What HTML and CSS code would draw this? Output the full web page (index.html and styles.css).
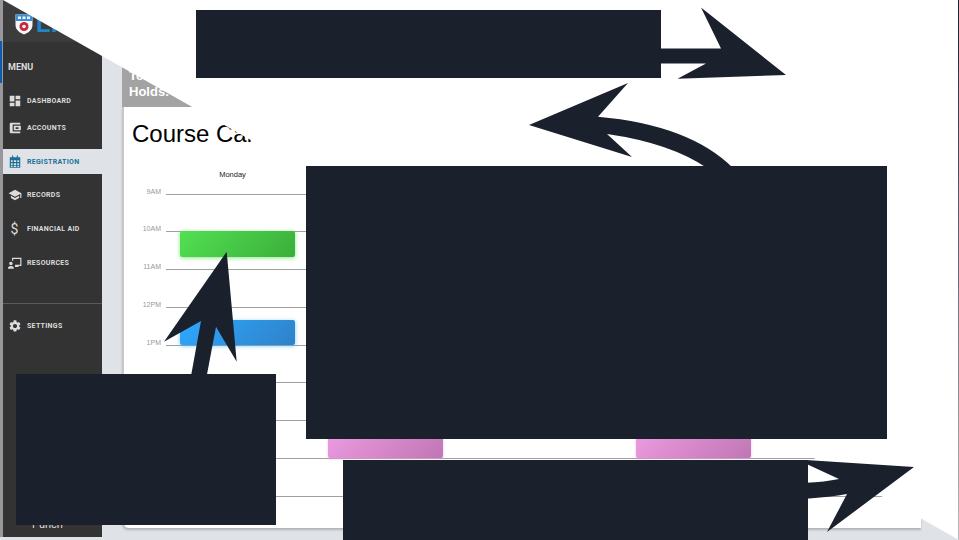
FILE: index.html
```html
<!DOCTYPE html>
<html lang="en">
<head>
<meta charset="utf-8">
<title>Course Calendar</title>
<link rel="stylesheet" href="styles.css">
</head>
<body>
<div class="app">
  <aside class="sidebar">
    <div class="brand">
      <svg class="shield" viewBox="0 0 18 21"><path d="M0.5 0.5H17.5V11C17.5 16 13 19 9 20.5C5 19 0.5 16 0.5 11Z" fill="#f4f6f8"/><path d="M0.5 0.5H17.5V7H0.5Z" fill="#3f8fd0"/><rect x="3" y="2.5" width="3" height="2.5" fill="#eaf2fa"/><rect x="7.5" y="2.5" width="3" height="2.5" fill="#eaf2fa"/><rect x="12" y="2.5" width="3" height="2.5" fill="#eaf2fa"/><circle cx="9" cy="12.5" r="4.5" fill="#c8283c"/><circle cx="9" cy="12.5" r="1.8" fill="#f4f6f8"/></svg>
      <span class="brand-name">LIU</span>
    </div>
    <div class="menu-title">MENU</div>
    <nav class="nav-top">
      <a class="nav-item"><svg class="icon" viewBox="0 0 24 24"><path d="M3 13h8V3H3v10zm0 8h8v-6H3v6zm10 0h8V11h-8v10zm0-18v6h8V3h-8z"/></svg>DASHBOARD</a>
      <a class="nav-item"><svg class="icon" viewBox="0 0 24 24"><path fill-rule="evenodd" d="M5 3h16v3H8v12h13v3H5a2 2 0 0 1-2-2V5a2 2 0 0 1 2-2zM10 8h12v8H10zm3 2.500v3h5v-3z"/></svg>ACCOUNTS</a>
    </nav>
    <nav class="nav-main">
      <a class="nav-item active"><svg class="icon" viewBox="0 0 24 24"><path fill-rule="evenodd" d="M7 1h2v3h6V1h2v3h4v18H3V4h4zM5 9v3h3V9zm5 0v3h4V9zm6 0v3h3V9zM5 14v3h3v-3zm5 0v3h4v-3zm6 0v3h3v-3zM5 18.500v2h3v-2zm5 0v2h4v-2zm6 0v2h3v-2z"/></svg>REGISTRATION</a>
      <a class="nav-item"><svg class="icon" viewBox="0 0 24 24"><path d="M5 13.180v4L12 21l7-3.820v-4L12 17l-7-3.820zM12 3L1 9l11 6 9-4.910V17h2V9L12 3z"/></svg>RECORDS</a>
      <a class="nav-item"><span class="icon dollar">$</span>FINANCIAL AID</a>
      <a class="nav-item"><svg class="icon" viewBox="0 0 24 24"><path fill-rule="evenodd" d="M7 3h16v14H12v-2h9V5H9v3H7zM5 10a3 3 0 1 1 0 6 3 3 0 0 1 0-6zM0 21c0-2.500 2-4 5-4s5 1.500 5 4v1H0zM12 17h6v2h-6z"/></svg>RESOURCES</a>
    </nav>
    <nav class="nav-settings">
      <a class="nav-item"><svg class="icon" viewBox="0 0 24 24"><path d="M19.140 12.940c.04-.3.06-.61.06-.94 0-.32-.02-.64-.07-.94l2.030-1.580a.49.49 0 0 0 .12-.61l-1.920-3.320a.488.488 0 0 0-.59-.29l-2.390.96c-.5-.38-1.030-.7-1.620-.94l-.36-2.540a.484.484 0 0 0-.48-.41h-3.840c-.24 0-.43.17-.47.41l-.36 2.540c-.59.24-1.130.57-1.620.94l-2.390-.96c-.22-.08-.47 0-.59.29L2.740 8.870c-.12.21-.08.47.12.61l2.030 1.580c-.05.3-.09.63-.09.94s.02.64.07.94l-2.030 1.580a.49.49 0 0 0-.12.61l1.920 3.320c.12.22.37.29.59.22l2.390-.96c.5.38 1.030.7 1.620.94l.36 2.540c.05.24.24.41.48.41h3.840c.24 0 .44-.17.47-.41l.36-2.540c.59-.24 1.130-.56 1.620-.94l2.390.96c.22.08.47 0 .59-.22l1.920-3.320c.12-.22.07-.47-.12-.61l-2.010-1.580zM12 15.600c-1.980 0-3.600-1.620-3.600-3.600s1.620-3.600 3.600-3.600 3.600 1.620 3.600 3.600-1.620 3.600-3.600 3.600z"/></svg>SETTINGS</a>
    </nav>
    <div class="sidebar-foot">Punch</div>
  </aside>
  <main class="main">
    <div class="banner">
      <p>Total</p>
      <p>Holds:</p>
    </div>
    <section class="card">
      <h1 class="title">Course Calendar</h1>
      <div class="calendar">
        <div class="days">
          <div>Monday</div><div>Tuesday</div><div>Wednesday</div><div>Thursday</div><div>Friday</div>
        </div>
        <div class="hour first"><span>9AM</span></div>
        <div class="hour"><span>10AM</span></div>
        <div class="hour"><span>11AM</span></div>
        <div class="hour"><span>12PM</span></div>
        <div class="hour"><span>1PM</span></div>
        <div class="hour"><span>2PM</span></div>
        <div class="hour"><span>3PM</span></div>
        <div class="hour"><span>4PM</span></div>
        <div class="hour"><span>5PM</span></div>
        <div class="event green" style="left:58px;top:61px;height:26px"></div>
        <div class="event blue" style="left:58px;top:150px;height:25px"></div>
        <div class="event pink" style="left:206px;top:250px;height:38px"></div>
        <div class="event pink" style="left:514px;top:250px;height:38px"></div>
      </div>
    </section>
  </main>
</div>
<div class="sheet"></div>
<svg class="arrows" viewBox="0 0 959 540">
  <path d="M701,7.500L721,48.500H650V63.500H706L677.500,78.700L786,75Z"/>
  <path d="M529,125L628,83L598,116.700Q690,125 733,168L707,168Q670,143 607,134L632,157Z"/>
  <path d="M226.700,251.700L164,341.700L201,321L191,376H206.700L216,326.700L236.700,361.700Z"/>
  <path d="M806,460L914,467L827,532L847,494Q830,497 806,498.700V482.700Q825,482 839,479L806,463.700Z"/>
</svg>
<div class="block block-top"></div>
<div class="block block-center"></div>
<div class="block block-left"></div>
<div class="block block-bottom"></div>
</body>
</html>
```

FILE: styles.css
```css
* { box-sizing: border-box; }
html, body { margin: 0; padding: 0; }
body {
  width: 959px;
  height: 540px;
  overflow: hidden;
  position: relative;
  background: #dfe2e6;
  font-family: "Liberation Sans", Arial, sans-serif;
}
.app {
  display: flex;
  width: 959px;
  height: 540px;
}
.sidebar {
  flex: 0 0 102px;
  height: 537px;
  display: flex;
  flex-direction: column;
  background: #333333;
  border-left: 3px solid #98989c;
  color: #dcdcdc;
  font-family: Roboto, "Liberation Sans", sans-serif;
}
.brand {
  height: 42px;
  flex: none;
  display: flex;
  align-items: center;
  gap: 3px;
  padding: 6px 0 0 12px;
  background: #3c3c3c;
}
.shield { width: 18px; height: 21px; }
.brand-name {
  font-family: "Liberation Sans", sans-serif;
  font-size: 24px;
  font-weight: 700;
  color: #1b86c8;
  line-height: 1;
}
.menu-title {
  height: 45.500px;
  flex: none;
  padding: 19px 0 0 5px;
  font-size: 9px;
  line-height: 12px;
  font-weight: 700;
  position: relative;
}
.menu-title::before {
  content: "";
  position: absolute;
  left: -3px;
  top: -1px;
  width: 2px;
  height: 42px;
  background: #0b5cb0;
}
.nav-item {
  display: flex;
  align-items: center;
  gap: 5.500px;
  padding-left: 4.500px;
  font-size: 7px;
  font-weight: 700;
  letter-spacing: 0.3px;
  white-space: nowrap;
}
.icon {
  width: 14px;
  height: 14px;
  flex: none;
  fill: currentColor;
}
.dollar {
  font-size: 14px;
  font-weight: 400;
  line-height: 14px;
  text-align: center;
  letter-spacing: 0;
}
.nav-top .nav-item { height: 27px; }
.nav-main {
  margin-top: 7.500px;
  display: flex;
  flex-direction: column;
  gap: 8.700px;
}
.nav-main .nav-item { height: 25px; }
.nav-item.active {
  background: #dfe3e8;
  color: #1a6f96;
}
.nav-item.active .icon { color: #1a6f96; }
.nav-settings {
  margin-top: 28px;
  padding-top: 9px;
  border-top: 1px solid #5a5a5a;
}
.nav-settings .nav-item { height: 25px; }
.sidebar-foot {
  margin-top: auto;
  padding: 0 0 6px 29px;
  font-size: 11px;
  line-height: 13px;
}
.main {
  flex: 1;
  min-width: 0;
  display: flex;
  flex-direction: column;
  padding: 60px 38px 12px 20px;
}
.banner {
  height: 47px;
  flex: none;
  padding: 8px 0 0 7px;
  background: #a3a3a3;
  color: #fff;
  font-size: 13px;
  font-weight: 700;
  line-height: 16px;
}
.banner p { margin: 0; }
.card {
  flex: 1;
  background: #fff;
  border-left: 2px solid #c4c6ca;
  border-bottom-left-radius: 6px;
  box-shadow: 0 2px 2px #b4b4b8;
  padding: 13px 0 0 0;
}
.title {
  margin: 0 0 0 8px;
  font-size: 24px;
  line-height: 28px;
  font-weight: 400;
  color: #000;
}
.calendar {
  position: relative;
  margin: 22px 0 0 -2px;
}
.days {
  display: grid;
  grid-template-columns: repeat(5, 154px);
  margin-left: 33.500px;
  height: 8px;
  font-size: 7.500px;
  line-height: 10px;
  text-align: center;
  color: #222;
}
.hour {
  height: 37.750px;
  display: flex;
  align-items: flex-end;
  color: #999;
  font-size: 7px;
}
.hour.first { height: 16.700px; }
.hour span {
  width: 39px;
  line-height: 8px;
  text-align: right;
  margin-bottom: -1px;
}
.hour::after {
  content: "";
  flex: 1;
  height: 1px;
  margin-left: 5px;
  background: #a0a0a0;
}
.event {
  position: absolute;
  width: 115px;
  border-radius: 2px;
}
.green {
  background: linear-gradient(135deg, #52e052, #3bae3b);
  box-shadow: 0 1px 4px rgba(80, 224, 80, 0.7);
}
.blue {
  background: linear-gradient(135deg, #2ea8ff, #2f82c8);
  box-shadow: 0 1px 4px rgba(46, 168, 255, 0.6);
}
.pink {
  background: linear-gradient(135deg, #f09ee4, #c076b4);
  box-shadow: 0 1px 3px rgba(240, 158, 228, 0.6);
}
.sheet {
  position: absolute;
  inset: 0;
  background: linear-gradient(#1a202c, #b8b8bc) right top / 1px 100% no-repeat, #fff;
  clip-path: polygon(3px 0, 959px 0, 959px 540px);
}
.arrows {
  position: absolute;
  left: 0;
  top: 0;
  width: 959px;
  height: 540px;
  fill: #1a202c;
}
.block {
  position: absolute;
  background: #1a202c;
}
.block-top { left: 196px; top: 10px; width: 465px; height: 68px; }
.block-center { left: 306px; top: 166px; width: 581px; height: 273px; }
.block-left { left: 16px; top: 374px; width: 260px; height: 151px; }
.block-bottom { left: 343px; top: 460px; width: 465px; height: 80px; }
```
